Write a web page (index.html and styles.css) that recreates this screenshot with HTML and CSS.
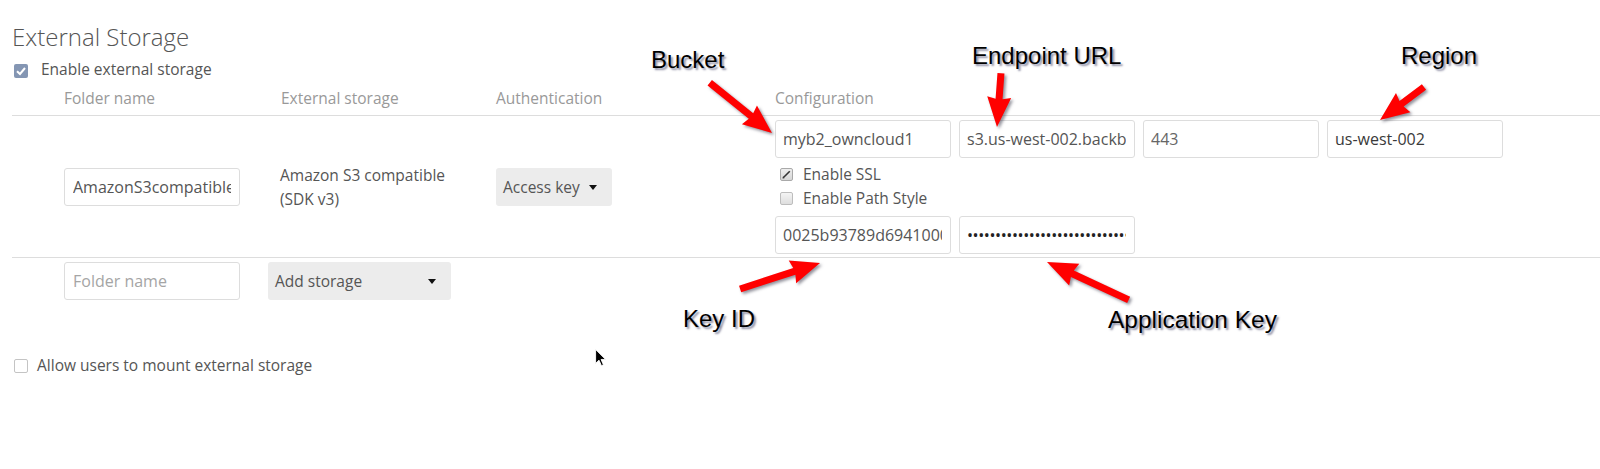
FILE: index.html
```html
<!DOCTYPE html>
<html>
<head>
<meta charset="utf-8">
<title>External Storage</title>
<link rel="stylesheet" href="styles.css">
</head>
<body>
<div class="page">
  <h2 class="title">External Storage</h2>
  <label class="check-row enable"><span class="cb cb-checked"><svg viewBox="0 0 14 14" width="14" height="14"><path d="M3 7.2 L6 10 L11 4" fill="none" stroke="#fff" stroke-width="2"/></svg></span>Enable external storage</label>

  <div class="mounts">
    <div class="mrow head">
      <div class="c-status"></div>
      <div class="c-folder">Folder name</div>
      <div class="c-backend">External storage</div>
      <div class="c-auth">Authentication</div>
      <div class="c-config">Configuration</div>
    </div>

    <div class="mrow mount">
      <div class="c-status"></div>
      <div class="c-folder"><input class="field" type="text" value="AmazonS3compatible"></div>
      <div class="c-backend backend-text">Amazon S3 compatible<br>(SDK v3)</div>
      <div class="c-auth"><div class="dropdown auth-dd">Access key<span class="caret"></span></div></div>
      <div class="c-config cfg">
        <div class="cfg-line">
          <input class="field" type="text" value="myb2_owncloud1">
          <input class="field" type="text" value="s3.us-west-002.backblazeb2.com">
          <input class="field light" type="text" value="443">
          <input class="field dark" type="text" value="us-west-002">
        </div>
        <label class="cfg-check"><span class="sbox sbox-on"><svg viewBox="0 0 13 13" width="13" height="13"><path d="M3.2 9.8 L9.8 3.2" stroke="#333" stroke-width="1.6" fill="none"/><path d="M2.5 10.5 L4.5 10.2 L3 8.6 Z" fill="#333"/></svg></span>Enable SSL</label>
        <label class="cfg-check"><span class="sbox"></span>Enable Path Style</label>
        <div class="cfg-line second">
          <input class="field" type="text" value="0025b93789d69410000000002">
          <input class="field pw" type="password" value="K002abcdefghijklmnopqrstuvwxyz12">
        </div>
      </div>
    </div>

    <div class="mrow add">
      <div class="c-status"></div>
      <div class="c-folder"><input class="field" type="text" placeholder="Folder name"></div>
      <div class="c-backend-add"><div class="dropdown add-dd">Add storage<span class="caret"></span></div></div>
      <div></div>
      <div></div>
    </div>
  </div>

  <label class="check-row allow"><span class="cb cb-empty"></span>Allow users to mount external storage</label>
</div>

<div class="annot a-bucket">Bucket</div>
<div class="annot a-endpoint">Endpoint URL</div>
<div class="annot a-region">Region</div>
<div class="annot a-keyid">Key ID</div>
<div class="annot a-appkey">Application Key</div>

<svg class="arrows" width="1600" height="469" viewBox="0 0 1600 469">
  <g fill="#ff0000">
    <g transform="translate(772 133) rotate(38.9)"><polygon points="0,0 -29,-12 -27,-3.5 -80,-3.5 -80,3.5 -27,3.5 -29,12"/></g>
    <g transform="translate(997 127) rotate(94.2)"><polygon points="0,0 -30,-12 -28,-3.5 -54,-3.5 -54,3.5 -28,3.5 -30,12"/></g>
    <g transform="translate(1380 120) rotate(143.1)"><polygon points="0,0 -29,-12 -27,-3.5 -55,-3.5 -55,3.5 -27,3.5 -29,12"/></g>
    <g transform="translate(820 263) rotate(-18)"><polygon points="0,0 -29,-12 -27,-3.5 -84,-3.5 -84,3.5 -27,3.5 -29,12"/></g>
    <g transform="translate(1047 262) rotate(-155.1)"><polygon points="0,0 -30,-12 -28,-3.5 -90,-3.5 -90,3.5 -28,3.5 -30,12"/></g>
  </g>
</svg>

<svg class="cursor" width="12" height="18" viewBox="0 0 13 20"><path d="M0.5 0.5 L0.5 16 L4.3 12.4 L7 18.6 L9.2 17.6 L6.6 11.6 L11.6 11.6 Z" fill="#000" stroke="#fff" stroke-width="1"/></svg>
</body>
</html>
```

FILE: styles.css
```css
* { box-sizing: border-box; }
html, body { margin: 0; padding: 0; background: #fff; }
body {
  font-family: "Open Sans", "Noto Sans", sans-serif;
  font-size: 15.5px;
  color: #555;
  width: 1600px;
  height: 469px;
  overflow: hidden;
  position: relative;
}
.page { padding: 21px 0 0 12px; }
.title {
  margin: 0;
  font-size: 24px;
  font-weight: 300;
  line-height: 32px;
  color: #555;
}
.check-row {
  display: flex;
  align-items: flex-start;
  line-height: 20px;
}
.enable { margin-top: 6px; }
.enable .cb { margin: 5px 13px 0 2px; }
.cb {
  width: 14px;
  height: 14px;
  flex: none;
  border-radius: 2px;
  display: block;
}
.cb svg { display: block; }
.cb-checked { background: #8496b3; }
.cb-empty { background: #fff; border: 1px solid #c4c4c4; }
.allow { margin-top: 51px; }
.allow .cb { margin: 4px 9px 0 2px; }

.mrow {
  display: grid;
  grid-template-columns: 52px 204px 228px 279px 1fr;
  align-items: center;
}
.head {
  padding: 9px 0 7px;
  line-height: 20px;
  color: #999;
  border-bottom: 1px solid #ddd;
}
.head .c-backend { padding-left: 13px; }
.mount { border-bottom: 1px solid #ddd; }
.backend-text { padding-left: 12px; line-height: 24px; }

.field {
  display: block;
  width: 176px;
  height: 38px;
  margin: 0;
  padding: 0 8px 0 7px;
  border: 1px solid #ddd;
  border-radius: 3px;
  background: #fff;
  font-family: "Open Sans", "Noto Sans", sans-serif;
  font-size: 16px;
  color: #555;
  outline: none;
}
.c-folder .field { padding-left: 8px; }
.field::placeholder { color: #a5a5a5; }
.field.light { color: #666; }
.field.dark { color: #3a3a3a; }
.field.pw { color: #222; letter-spacing: -0.4px; }

.dropdown {
  display: inline-flex;
  align-items: center;
  height: 38px;
  padding: 0 15px 0 7px;
  background: #ececec;
  border-radius: 3px;
  color: #555;
}
.caret {
  width: 0;
  height: 0;
  border-left: 4.5px solid transparent;
  border-right: 4.5px solid transparent;
  border-top: 5px solid #111;
  margin-left: 9px;
  margin-top: 1px;
}
.add-dd {
  display: flex;
  width: 183px;
  justify-content: space-between;
}

.cfg { padding: 4px 0 3px; }
.cfg-line { display: flex; gap: 8px; }
.cfg-line.second { margin-top: 6px; }
.cfg-check {
  display: flex;
  align-items: flex-start;
  line-height: 24px;
  padding-left: 5px;
}
.cfg-line + .cfg-check { margin-top: 4px; }
.sbox {
  width: 13px;
  height: 13px;
  flex: none;
  margin: 6px 10px 0 0;
  border: 1px solid #bdbdbd;
  border-radius: 2px;
  background: linear-gradient(#f4f4f4, #dedede);
}
.sbox svg { display: block; margin: -1px 0 0 -1px; }
.sbox-on { background: linear-gradient(#eeeeee, #d6d6d6); border-color: #a9a9a9; }

.add { padding: 4px 0; align-items: start; }

.annot {
  position: absolute;
  font-family: "Liberation Sans", Arial, sans-serif;
  font-size: 24px;
  line-height: 24px;
  color: #000;
  white-space: nowrap;
  text-shadow: 2px 2px 2px rgba(50, 50, 90, 0.55);
}
.a-bucket { left: 651px; top: 48px; }
.a-endpoint { left: 972px; top: 44px; }
.a-region { left: 1401px; top: 44px; }
.a-keyid { left: 683px; top: 307px; }
.a-appkey { left: 1108px; top: 308px; font-size: 24.5px; }

.arrows {
  position: absolute;
  left: 0;
  top: 0;
  filter: drop-shadow(2px 2px 1.5px rgba(40, 40, 60, 0.5));
  pointer-events: none;
}
.cursor {
  position: absolute;
  left: 595px;
  top: 349px;
}
```
